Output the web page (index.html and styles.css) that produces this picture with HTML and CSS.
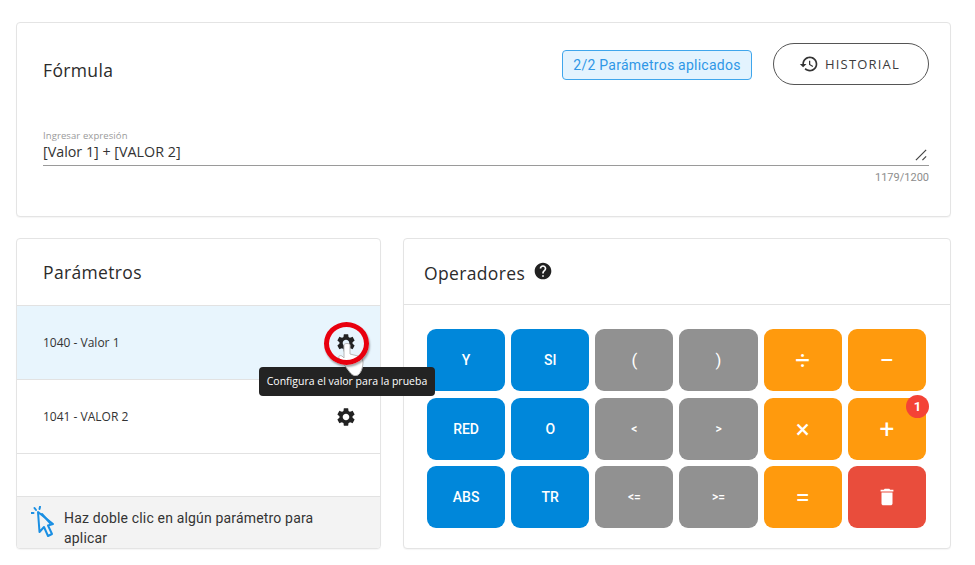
FILE: index.html
```html
<!DOCTYPE html>
<html lang="es">
<head>
<meta charset="utf-8">
<title>Fórmula</title>
<link rel="stylesheet" href="styles.css">
</head>
<body>
<main class="page">
  <section class="card formula">
    <div class="formula-head">
      <h2 class="title formula-title">Fórmula</h2>
      <div class="formula-actions">
        <span class="chip">2/2 Parámetros aplicados</span>
        <button class="history">
          <svg class="history-icon" viewBox="0 0 24 24"><path d="M13 3c-4.97 0-9 4.03-9 9H1l3.89 3.89.07.14L9 12H6c0-3.87 3.13-7 7-7s7 3.13 7 7-3.13 7-7 7c-1.93 0-3.68-.79-4.94-2.06l-1.42 1.42C8.27 19.99 10.51 21 13 21c4.97 0 9-4.03 9-9s-4.03-9-9-9zm-1 5v5l4.28 2.54.72-1.21-3.5-2.08V8H12z"/></svg>
          HISTORIAL
        </button>
      </div>
    </div>
    <div class="field">
      <label class="field-label">Ingresar expresión</label>
      <div class="field-value">[Valor 1] + [VALOR 2]</div>
      <svg class="resize" viewBox="0 0 14 14"><path d="M1 12 12 1M8 12l4-4"/></svg>
    </div>
    <div class="counter">1179/1200</div>
  </section>

  <div class="lower">
    <section class="card params">
      <h2 class="title params-title">Parámetros</h2>
      <div class="param active">
        <span>1040 - Valor 1</span>
        <svg class="gear" viewBox="0 0 24 24"><path d="M19.14 12.94c.04-.3.06-.61.06-.94 0-.32-.02-.64-.07-.94l2.03-1.58c.18-.14.23-.41.12-.61l-1.92-3.32c-.12-.22-.37-.29-.59-.22l-2.39.96c-.5-.38-1.03-.7-1.62-.94l-.36-2.54c-.04-.24-.24-.41-.48-.41h-3.84c-.24 0-.43.17-.47.41l-.36 2.54c-.59.24-1.13.57-1.62.94l-2.39-.96c-.22-.08-.47 0-.59.22L2.74 8.87c-.12.21-.08.47.12.61l2.03 1.58c-.05.3-.09.63-.09.94s.02.64.07.94l-2.03 1.58c-.18.14-.23.41-.12.61l1.92 3.32c.12.22.37.29.59.22l2.39-.96c.5.38 1.03.7 1.62.94l.36 2.54c.05.24.24.41.48.41h3.84c.24 0 .44-.17.47-.41l.36-2.54c.59-.24 1.13-.56 1.62-.94l2.39.96c.22.08.47 0 .59-.22l1.92-3.32c.12-.22.07-.47-.12-.61l-2.01-1.58zM12 15.6c-1.98 0-3.6-1.62-3.6-3.6s1.62-3.6 3.6-3.6 3.6 1.62 3.6 3.6-1.62 3.6-3.6 3.6z"/></svg>
      </div>
      <div class="param">
        <span>1041 - VALOR 2</span>
        <svg class="gear" viewBox="0 0 24 24"><path d="M19.14 12.94c.04-.3.06-.61.06-.94 0-.32-.02-.64-.07-.94l2.03-1.58c.18-.14.23-.41.12-.61l-1.92-3.32c-.12-.22-.37-.29-.59-.22l-2.39.96c-.5-.38-1.03-.7-1.62-.94l-.36-2.54c-.04-.24-.24-.41-.48-.41h-3.84c-.24 0-.43.17-.47.41l-.36 2.54c-.59.24-1.13.57-1.62.94l-2.39-.96c-.22-.08-.47 0-.59.22L2.74 8.87c-.12.21-.08.47.12.61l2.03 1.58c-.05.3-.09.63-.09.94s.02.64.07.94l-2.03 1.58c-.18.14-.23.41-.12.61l1.92 3.32c.12.22.37.29.59.22l2.39-.96c.5.38 1.03.7 1.62.94l.36 2.54c.05.24.24.41.48.41h3.84c.24 0 .44-.17.47-.41l.36-2.54c.59-.24 1.13-.56 1.62-.94l2.39.96c.22.08.47 0 .59-.22l1.92-3.32c.12-.22.07-.47-.12-.61l-2.01-1.58zM12 15.6c-1.98 0-3.6-1.62-3.6-3.6s1.62-3.6 3.6-3.6 3.6 1.62 3.6 3.6-1.62 3.6-3.6 3.6z"/></svg>
      </div>
      <div class="params-space"></div>
      <div class="hint">
        <svg class="click-icon" viewBox="0 0 24 32"><path class="click-arrow" d="M7 6 8.500 26 13 21 17 30 21 28 17 19.500 22 18Z"/><path class="click-rays" d="M5 4 3.500 2M8.500 3 9 .8M2.500 7H.5M11 8l8 9"/></svg>
        <p>Haz doble clic en algún parámetro para aplicar</p>
      </div>
    </section>

    <section class="card ops">
      <div class="ops-head">
        <h2 class="title">Operadores</h2>
        <svg class="help" viewBox="0 0 24 24"><path d="M12 2C6.480 2 2 6.480 2 12s4.480 10 10 10 10-4.480 10-10S17.520 2 12 2zm1 17h-2v-2h2v2zm2.070-7.750l-.9.920C13.450 12.900 13 13.500 13 15h-2v-.5c0-1.100.450-2.100 1.170-2.830l1.240-1.260c.370-.360.590-.860.590-1.410 0-1.100-.9-2-2-2s-2 .9-2 2H8c0-2.210 1.790-4 4-4s4 1.790 4 4c0 .880-.360 1.680-.930 2.250z"/></svg>
      </div>
      <div class="keys">
        <button class="key blue">Y</button>
        <button class="key blue">SI</button>
        <button class="key gray paren">(</button>
        <button class="key gray paren">)</button>
        <button class="key orange sym">÷</button>
        <button class="key orange sym">−</button>
        <button class="key blue">RED</button>
        <button class="key blue">O</button>
        <button class="key gray small">&lt;</button>
        <button class="key gray small">&gt;</button>
        <button class="key orange sym">×</button>
        <button class="key orange sym">+<span class="badge">1</span></button>
        <button class="key blue">ABS</button>
        <button class="key blue">TR</button>
        <button class="key gray small">&lt;=</button>
        <button class="key gray small">&gt;=</button>
        <button class="key orange sym">=</button>
        <button class="key red">
          <svg class="trash" viewBox="0 0 24 24"><path d="M6 19c0 1.100.9 2 2 2h8c1.100 0 2-.9 2-2V7H6v12zM19 4h-3.500l-1-1h-5l-1 1H5v2h14V4z"/></svg>
        </button>
      </div>
    </section>
    <div class="tooltip">Configura el valor para la prueba</div>
    <svg class="hand" viewBox="0 0 26 33"><path d="M6 2c0-2 6-2 6 0v9l8 2c3 1 5 3 5 6 0 5-2 11-5 13-4 2-7-1-9-4L1 15c-1-2 1-3 3-2l2 2z"/></svg>
    <span class="ring"></span>
  </div>
</main>
</body>
</html>
```
FILE: styles.css
```css
* { box-sizing: border-box; }
html, body { margin: 0; background: #fff; }
body { font-family: Roboto, "Open Sans", sans-serif; color: #212121; width: 975px; height: 565px; overflow: hidden; }
.page { padding: 22px 24px 0 16px; display: flex; flex-direction: column; gap: 21px; }
.card { background: #fff; border: 1px solid #e4e4e4; border-radius: 4px; box-shadow: 0 1px 1px rgba(0,0,0,.04); }
.title { margin: 0; font: 400 17.500px/24px "Open Sans", sans-serif; color: #2b2b2b; letter-spacing: .35px; }

.formula { height: 195px; padding: 20px 21px 0 26px; display: flex; flex-direction: column; }
.formula-head { display: flex; justify-content: space-between; align-items: flex-start; height: 42px; }
.formula-title { margin-top: 15px; }
.formula-actions { display: flex; align-items: center; gap: 21px; }
.chip { height: 30px; width: 190px; margin-top: 2px; display: flex; align-items: center; justify-content: center; background: #e3f3fe; border: 1px solid #3fa6ec; border-radius: 4px; color: #2f97e6; font-size: 14px; letter-spacing: .25px; }
.history { height: 42px; width: 156px; display: flex; align-items: center; justify-content: center; gap: 6px; background: #fff; border: 1px solid #555; border-radius: 21px; font: 400 13px "Open Sans", sans-serif; letter-spacing: 1.200px; color: #3c3c3c; padding: 0 3px 0 0; }
.history-icon { width: 20px; height: 20px; fill: #333; }

.field { position: relative; margin-top: 44px; height: 37px; border-bottom: 1px solid #9a9a9a; }
.field-label { display: block; font: 400 9.500px/12px "Open Sans", sans-serif; color: #9a9a9a; letter-spacing: .1px; padding-top: 1px; }
.field-value { font: 400 14.300px/19px "Open Sans", sans-serif; color: #333; }
.resize { position: absolute; right: 1px; bottom: 3px; width: 13px; height: 13px; fill: none; stroke: #444; stroke-width: 1.300; }
.counter { margin-top: 5px; text-align: right; font-size: 11px; line-height: 14px; color: #8d8d8d; }

.lower { position: relative; display: grid; grid-template-columns: 365px 548px; gap: 22px; height: 311px; }
.params { display: flex; flex-direction: column; overflow: hidden; }
.params-title { height: 66px; padding: 21px 26px 0; flex: none; }
.param { height: 74px; flex: none; border-top: 1px solid #e2e2e2; padding: 0 25px 0 26px; display: flex; align-items: center; justify-content: space-between; font: 400 12px "Open Sans", sans-serif; color: #333; }
.param.active { background: #e8f5fd; }
.gear { width: 22px; height: 22px; fill: #222; margin-right: -2px; }
.ring { position: absolute; left: 308px; top: 84px; width: 45px; height: 43px; border: 5px solid #e8000e; border-radius: 50%; box-shadow: 1px 2px 2px rgba(0,0,0,.35); }
.hand { position: absolute; left: 322px; top: 105px; width: 26px; height: 33px; fill: #fff; stroke: #b9b9b9; stroke-width: 1; }
.params-space { flex: 1; border-top: 1px solid #e2e2e2; }
.hint { flex: none; height: 52px; background: #f3f3f3; border-top: 1px solid #e2e2e2; display: flex; padding: 11px 12px 0 14px; gap: 9px; color: #333; font-size: 14px; letter-spacing: .17px; line-height: 20px; overflow: hidden; }
.hint p { margin: 0; width: 270px; }
.click-icon { width: 24px; height: 32px; flex: none; margin-top: -2px; fill: none; stroke: #1a8fe3; stroke-width: 2; stroke-linejoin: round; stroke-linecap: round; }

.ops-head { height: 66px; border-bottom: 1px solid #e2e2e2; display: flex; align-items: center; gap: 8px; padding: 2px 20px 0; }
.help { width: 20px; height: 20px; fill: #212121; margin-top: -4px; }
.keys { padding: 24px 23px 0 23px; display: grid; grid-template-columns: repeat(6, 78.170px); grid-auto-rows: 62px; column-gap: 6px; row-gap: 6.500px; }
.key { position: relative; border: 0; border-radius: 9px; color: #fff; font: 500 14px Roboto, sans-serif; display: flex; align-items: center; justify-content: center; padding: 0; }
.blue { background: #0087da; }
.gray { background: #919191; }
.orange { background: #ff9a0d; }
.red { background: #e94d3c; }
.small { font-size: 12px; }
.paren { font-size: 17px; font-weight: 400; }
.sym { font-size: 26px; font-weight: 400; }
.trash { width: 22px; height: 22px; fill: #fff; }
.badge { position: absolute; right: -3px; top: -3px; width: 23px; height: 23px; border-radius: 50%; background: #f44336; color: #fff; font: 700 13px/23px Roboto, sans-serif; text-align: center; }

.tooltip { position: absolute; left: 243px; top: 129px; width: 176px; height: 29px; background: #232323; color: #fff; border-radius: 4px; font: 400 10.500px/29px "Open Sans", sans-serif; text-align: center; white-space: nowrap; }
```
